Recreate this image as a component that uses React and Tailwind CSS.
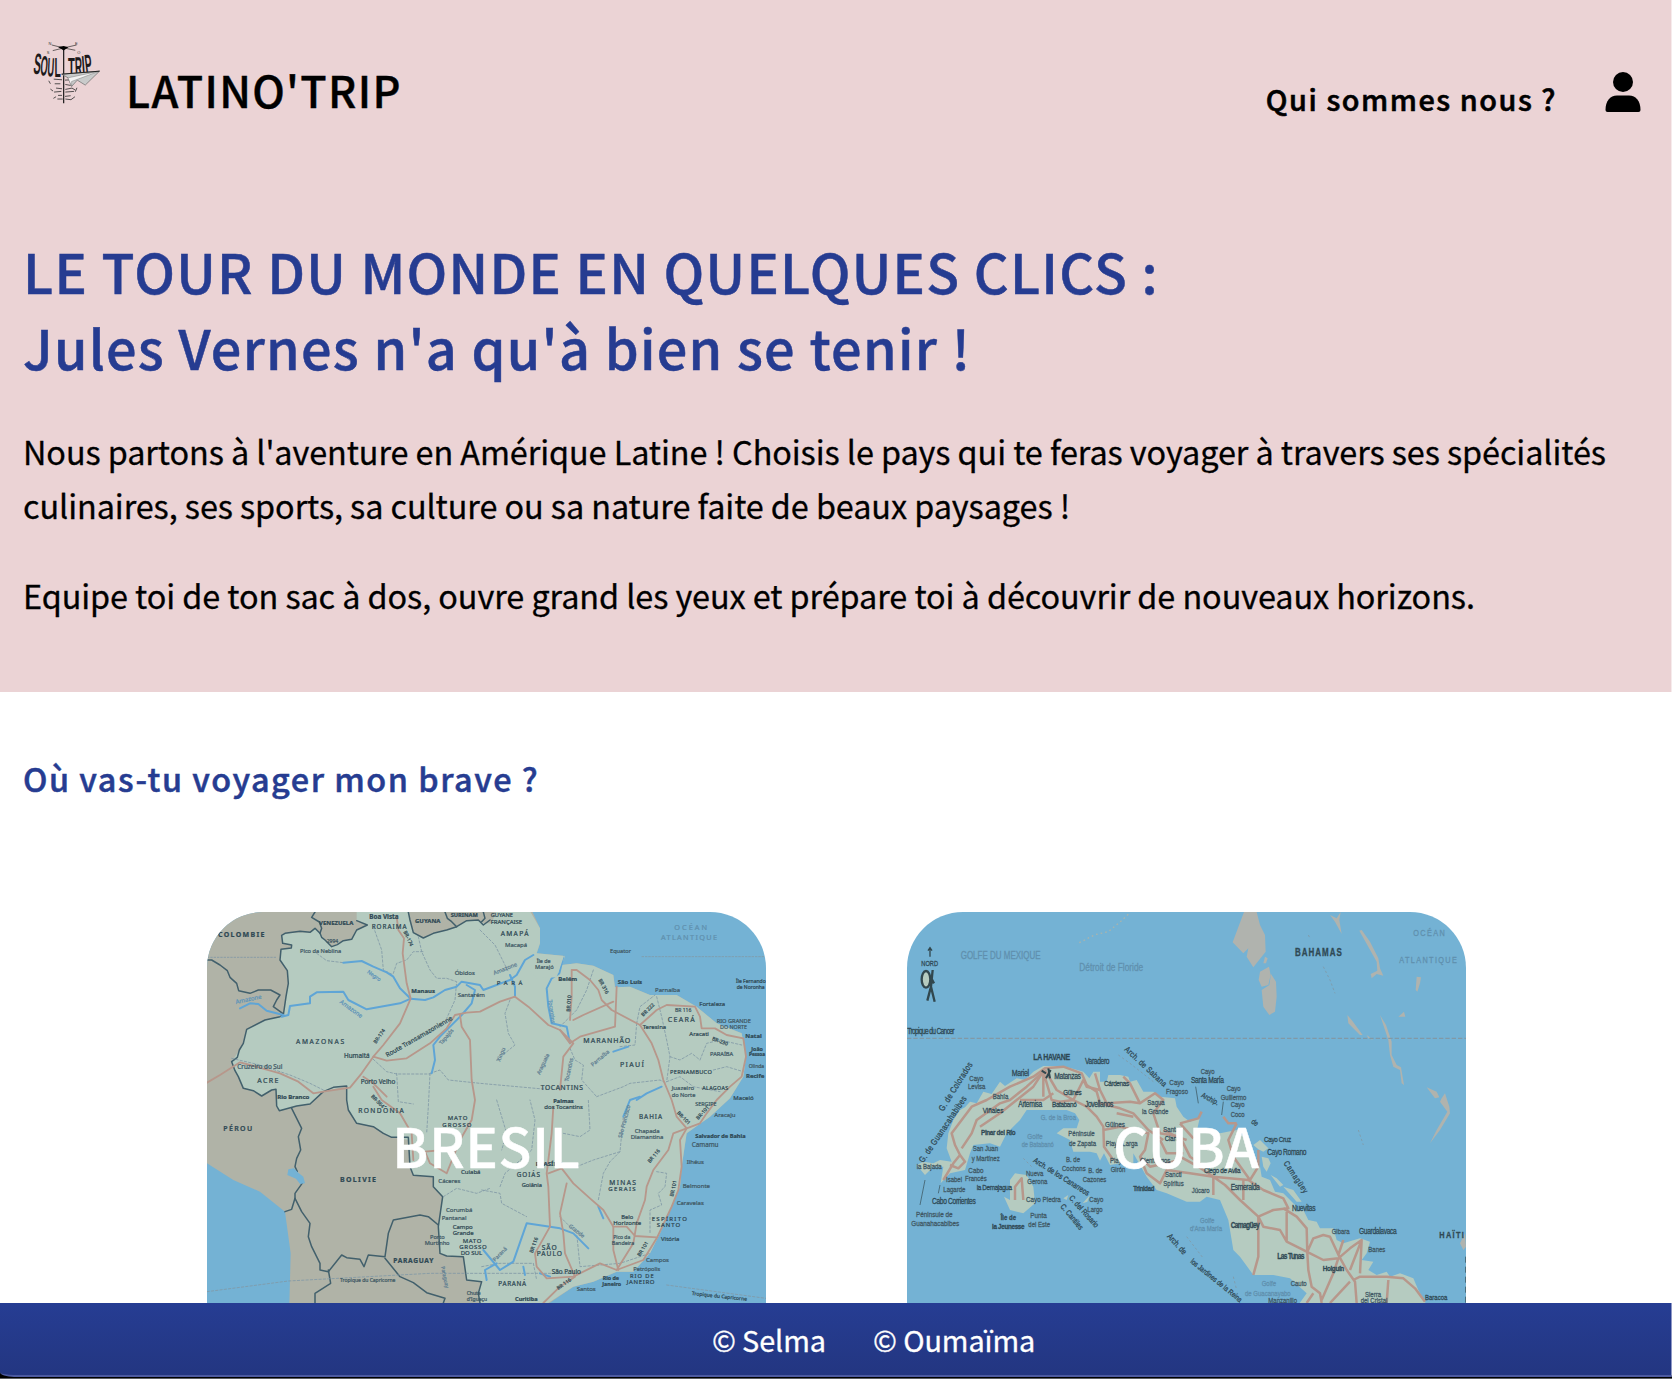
import React from "react";

const MAP_BOX = "21 36 1677 1173";
const INK = "#42606c";
const ROAD = "#b7978b";
const RIVER = "#5fa5d6";
const FAINT = "#8199a6";
const SEA = "#6090ae";

function Labels({ items, stretch = 1 }) {
  return items.map(([x, y, text, size = 20, color = "#405864", rot = 0, spacing = 0, weight = 400], i) => (
    <text
      key={i}
      fontSize={size}
      fill={color}
      stroke={color}
      strokeWidth="0.7"
      letterSpacing={spacing}
      fontWeight={weight}
      transform={`translate(${x} ${y}) rotate(${rot}) scale(1 ${stretch})`}
    >
      {text}
    </text>
  ));
}

function Lines({ paths, stroke, width, dash }) {
  return paths.map((d, i) => (
    <path key={i} d={d} fill="none" stroke={stroke} strokeWidth={width} strokeDasharray={dash} strokeLinejoin="round" />
  ));
}

const B = "#2f4954";

const brazilLabels = [
  [54, 110, "COLOMBIE", 21, B, 0, 4, 700], [357, 74, "VENEZUELA", 18, B, 0, 0, 700], [380, 128, "2994", 15],
  [508, 58, "Boa Vista", 19, B, 0, 0, 700], [515, 86, "RORAIMA", 19, B, 0, 3], [645, 69, "GUYANA", 18, B, 0, 0, 700],
  [752, 52, "SURINAM", 17, B, 0, 0, 700], [300, 159, "Pico da Neblina", 17], [872, 52, "GUYANE", 17, B], [872, 71, "FRANÇAISE", 18, B],
  [902, 109, "AMAPÁ", 20, B, 0, 4], [915, 140, "Macapá", 18], [764, 224, "Óbidos", 18], [634, 278, "Manaus", 18, B, 0, 0, 700],
  [773, 292, "Santarém", 18], [288, 433, "AMAZONAS", 20, B, 0, 5], [432, 474, "Humaitá", 19, B],
  [112, 508, "Cruzeiro do Sul", 19], [172, 549, "ACRE", 21, B, 0, 4], [232, 597, "Rio Branco", 18, B, 0, 0, 700],
  [482, 552, "Porto Velho", 19, B], [475, 638, "RONDÔNIA", 20, B, 0, 4], [562, 472, "Route Transamazonienne", 19, B, -30, 0],
  [528, 432, "BR-174", 15, B, -55], [610, 95, "BR-174", 15, B, 65], [512, 590, "BR-364", 15, B, 45],
  [500, 218, "Negro", 16, "#5c93b9", 35], [418, 308, "Amazone", 18, "#5c93b9", 36], [108, 312, "Amazone", 18, "#5c93b9", -12],
  [725, 435, "Tapajós", 16, "#607e92", -50], [890, 255, "P   A   R   Á", 18, B, 0, 3], [1010, 190, "Île de", 16], [1005, 208, "Marajó", 17],
  [1075, 242, "Belém", 18, B, 0, 0, 700], [1253, 253, "São Luís", 18, B, 0, 0, 700], [1230, 159, "Equator", 17],
  [1423, 90, "OCÉAN", 22, SEA, 0, 6], [1383, 120, "ATLANTIQUE", 22, SEA, 0, 4], [1365, 275, "Parnaíba", 18],
  [1498, 317, "Fortaleza", 18, B], [1403, 367, "CEARÁ", 21, B, 0, 4], [1425, 337, "BR 116", 15], [1328, 388, "Teresina", 18, B],
  [1550, 369, "RIO GRANDE", 17], [1560, 386, "DO NORTE", 16], [1468, 407, "Aracati", 18, B], [1636, 413, "Natal", 18, B, 0, 0, 700],
  [1654, 452, "João", 16, B, 0, 0, 700], [1647, 469, "Pessoa", 14, B, 0, 0, 700], [1646, 503, "Olinda", 15], [1638, 535, "Recife", 18, B, 0, 0, 700],
  [1530, 468, "PARAÍBA", 17], [1410, 522, "PERNAMBUCO", 17, B, 0, 1], [1415, 571, "Juazeiro", 18], [1415, 590, "do Norte", 17], [1507, 569, "ALAGOAS", 16, B, 0, 1],
  [1600, 601, "Maceió", 18, B], [1486, 617, "SERGIPE", 16], [1150, 429, "MARANHÃO", 21, B, 0, 3], [1260, 501, "PIAUÍ", 21, B, 0, 4],
  [1022, 571, "TOCANTINS", 20, B, 0, 2], [1060, 609, "Palmas", 17, B, 0, 0, 700], [1033, 627, "dos Tocantins", 18, B],
  [1608, 250, "Île Fernando", 15, B], [1610, 268, "de Noronha", 15, B], [70, 692, "PÉROU", 21, B, 0, 4, 600], [420, 847, "BOLIVIE", 21, B, 0, 4, 700],
  [580, 1088, "PARAGUAY", 20, B, 0, 2, 700], [420, 1147, "Tropique du Capricorne", 15], [743, 660, "MATO", 18, B, 0, 3], [727, 680, "GROSSO", 18, B, 0, 3],
  [783, 821, "Cuiabá", 18, B], [715, 849, "Cáceres", 18], [738, 936, "Corumbá", 18], [725, 959, "Pantanal", 18],
  [758, 987, "Campo", 18, B], [758, 1005, "Grande", 18, B], [690, 1017, "Porto", 17], [674, 1036, "Murtinho", 17], [788, 1028, "MATO", 18, B, 0, 2], [778, 1047, "GROSSO", 18, B, 0, 2], [782, 1066, "DO SUL", 18, B],
  [1317, 658, "BAHIA", 19, B, 0, 3], [1304, 700, "Chapada", 18], [1292, 718, "Diamantina", 18], [1543, 650, "Aracaju", 18],
  [1486, 714, "Salvador de Bahia", 17, B, 0, 0, 700], [1475, 741, "Camamu", 19], [1460, 793, "Ilhéus", 18], [1448, 865, "Belmonte", 18], [1430, 915, "Caravelas", 18],
  [1228, 856, "MINAS", 20, B, 0, 4], [1225, 874, "GERAIS", 18, B, 0, 4], [1355, 963, "ESPÍRITO", 18, B, 0, 4], [1370, 982, "SANTO", 18, B, 0, 3],
  [950, 832, "GOIÁS", 19, B, 0, 3], [965, 860, "Goiânia", 17, B], [1007, 798, "BRASÍLIA", 18, B, 0, 0, 700],
  [1264, 956, "Belo", 17, B], [1240, 974, "Horizonte", 18, B], [1383, 1022, "Vitória", 18, B], [1240, 1018, "Pico da", 15], [1235, 1035, "Bandeira", 16],
  [1025, 1050, "SÃO", 20, B, 0, 3], [1010, 1069, "PAULO", 20, B, 0, 3], [1055, 1122, "São Paulo", 19, B],
  [1338, 1087, "Campos", 18], [1300, 1112, "Petrópolis", 17], [1290, 1133, "RIO DE", 17, B, 0, 3], [1280, 1152, "JANEIRO", 18, B, 0, 2],
  [1208, 1139, "Rio de", 16, B, 0, 0, 700], [1207, 1157, "Janeiro", 16, B, 0, 0, 700], [1130, 1173, "Santos", 18], [895, 1158, "PARANÁ", 19, B, 0, 2],
  [945, 1202, "Curitiba", 17, B, 0, 0, 700], [1475, 1185, "Tropique du Capricorne", 15, B, 6], [800, 1185, "Chute", 15], [800, 1203, "d'Iguaçu", 15],
  [1350, 790, "BR 116", 15, B, -50], [1420, 890, "BR 101", 15, B, -78], [1430, 640, "BR-101", 15, B, 45],
  [1495, 660, "BR-101", 15, B, -48], [1320, 1070, "BR 101", 15, B, -58], [998, 1060, "BR 116", 15, B, -70], [1075, 1170, "BR 116", 15, B, -35],
  [1330, 350, "BR 222", 15, B, -45], [1195, 240, "BR 316", 15, B, 62], [1110, 335, "BR 010", 15, B, -86], [1535, 420, "BR-230", 15, B, 20],
  [1045, 300, "Tocantins", 16, "#5c93b9", 82], [1020, 525, "Araguaia", 16, "#607e92", -65], [1105, 545, "Tocantins", 16, "#607e92", -78],
  [900, 485, "Xingu", 16, "#607e92", -68], [1178, 500, "Parnaíba", 16, "#607e92", -40], [1265, 715, "São Francisco", 16, "#607e92", -75],
  [885, 1085, "Paraná", 16, "#607e92", -45], [1105, 980, "Grande", 16, "#607e92", 38], [883, 225, "Amazone", 17, "#607e92", -22], [723, 1100, "Paraguay", 15, "#607e92", 78],
];

function BrazilMap() {
  return (
    <svg viewBox={MAP_BOX} preserveAspectRatio="none" className="block h-full w-full" fontFamily="'Noto Sans', sans-serif">
      <rect x="0" y="0" width="1720" height="1230" fill="#74b2d4" />
      <path
        fill="#b0b3a7"
        d="M0 20H990L1020 85V130L1010 160L1095 168L1085 195L1130 190L1180 197L1240 225L1245 262L1290 260L1350 285L1430 285L1490 320L1550 370L1625 400L1638 470L1630 530L1590 595L1530 650L1460 700L1445 800L1440 860L1410 930L1380 1000L1350 1060L1300 1115L1250 1115L1180 1145L1120 1160L1040 1215H268L272 1060L255 935L180 875L100 840L15 786Z"
      />
      <path
        fill="#b5cbc0"
        d="M470 30V62L502 75L470 90L455 118L430 122L395 140L375 120L360 100L345 85L330 97L255 100L245 106L248 130L275 135L274 144L243 148L240 180L262 212L265 250L250 345L240 350L195 360L140 388L130 430L118 450L95 485L115 530L130 565L160 572L185 588L215 570L228 568L230 618L238 632L290 618L330 612L370 575L440 558L440 600L445 630L470 670L520 680L575 712L625 720L630 800L640 826L700 830L700 860L728 890L715 980L720 1060L740 1068L790 1070L800 1140L845 1145L835 1180L840 1215H1035L1120 1160L1180 1145L1250 1115L1300 1115L1350 1060L1380 1000L1410 930L1440 860L1445 800L1460 700L1530 650L1590 595L1630 530L1638 470L1625 400L1550 370L1490 320L1430 285L1350 285L1290 260L1245 262L1240 225L1180 197L1130 190L1085 195L1095 168L1010 160L1020 130V85L988 30H890L875 70L850 70L835 60L800 62L770 80L740 90L700 100L670 114L640 98L628 60V30Z"
      />
      <g strokeLinecap="round">
        <Lines
          stroke={INK}
          width={4.5}
          paths={[
            "M470 62L502 75L470 90L455 118L430 122L412 134L395 140L375 120L365 112L360 100L345 85L330 97L300 94L255 100L245 106L248 130L275 135L274 144L243 148L240 180L262 212L265 250L258 290L250 345L240 350L195 360L140 388L130 430L118 450L112 472L95 485L105 512L115 530L130 565L160 572L185 588L215 570L228 568L230 618L238 632L290 618L330 612L370 575L400 562L440 558L440 600L445 630L470 670L520 680L550 700L575 712L625 712L630 800L640 826L700 830L700 860L728 890L715 980L720 1060L740 1068L790 1070L800 1140L845 1145L835 1180L840 1209",
            "M625 36L630 60L640 98L670 114L700 100L740 90L770 80L800 62L835 60L850 75L870 60",
            "M21 180H35L60 195L82 212L90 232L110 250L116 272L150 280L175 270L212 270L240 285L230 300L220 320L248 340",
            "M345 36L335 52L358 66L365 85L360 100", "M735 36L742 55L755 65L770 80", "M850 36L855 55L845 65",
            "M275 625L305 685L295 710L302 750L290 775L285 800L292 815M308 848L285 880V895L275 928L255 935",
            "M285 895L305 935L330 970L325 1010L335 1040L360 1090V1110L385 1115L425 1065L440 1073L480 1078L492 1100L505 1065L555 1070L565 1000L580 960L660 945L685 950L715 975",
            "M555 1075L600 1130L640 1148L680 1178L735 1195L730 1209", "M385 1110L392 1150L345 1180V1209",
          ]}
        />
        <Lines
          stroke={FAINT}
          width={2.5}
          dash="7 6"
          paths={[
            "M520 80L545 150L550 210L580 225", "M655 110L665 155L690 210L710 235H740L770 245L765 300L740 355", "M350 160L380 182L430 188",
            "M580 220L590 190L620 180L640 155H670", "M95 475L180 495L270 525L330 550L370 570", "M520 478L560 515L590 522H690", "M590 520L595 605L640 612",
            "M690 520L720 510L745 540L840 550L1040 568", "M690 520L685 620L680 700", "M840 90L885 135L925 215", "M930 300L915 340L925 400L945 435L890 480",
            "M1180 210L1160 270L1130 330L1080 380", "M1110 445L1125 480L1150 495L1145 540L1190 590", "M1190 590L1270 560L1290 550L1380 540L1400 550",
            "M1310 370L1305 435L1260 440", "M1310 370L1320 320L1365 285", "M1370 290L1385 350L1400 420L1410 470L1400 545", "M1410 470L1440 480L1475 460L1500 480L1520 430L1560 420L1625 435",
            "M1540 510L1580 500L1630 515", "M1400 545L1440 530L1480 560L1560 575", "M730 890L770 865L830 880L870 865", "M845 870L900 880L905 910L980 950",
            "M900 860L915 820L950 790L995 750L1005 660L990 600", "M890 600L920 700L905 750", "M1090 700L1140 710L1170 690L1165 600", "M1130 800L1180 780L1260 755L1270 650",
            "M1260 755L1230 785L1210 820L1195 900", "M1370 815L1400 820L1395 860L1375 880L1385 915L1350 930V1000", "M1080 950L1130 1000L1140 1100L1260 1090L1350 1060",
            "M21 1175L265 1143L690 1120H1130", "M1400 1155L1698 1195", "M845 1100L900 1090L1000 1090L1010 1140",
          ]}
        />
        <Lines
          stroke={RIVER}
          width={6}
          paths={[
            "M430 188L485 183L520 200L560 217L580 230L600 265L632 296", "M245 350L265 345L270 318L330 310V290L350 277L430 275L445 300L500 328L600 310L632 296L675 300L700 292L735 270L770 260L785 245L840 255L850 270L930 240L950 225L975 180L1000 165",
            "M120 325L150 310L175 312L200 332L250 345", "M800 255L825 270L815 310L785 345L760 370L720 410L700 435L705 480L695 520", "M930 225L945 260V290", "M1090 170L1078 220L1055 235L1040 265L1045 320L1055 370L1100 380L1110 430",
            "M1240 455L1285 440", "M1310 600L1340 580L1385 560", "M850 1050L900 1110L940 1085L980 970L1080 985L1120 1000L1165 1045", "M860 1140L855 1110L890 1090",
            "M1195 920L1210 955", "M970 1100L975 1125M1020 1120L1050 1130", "M1270 650L1290 600L1320 590",
          ]}
        />
        <path fill="#74b2d4" d="M265 808L282 805L295 818L310 830L315 850L300 852L288 836L262 825Z" />
        <path fill="#b5cbc0" d="M1000 168L1092 168L1070 232L1010 235L992 215Z" />
        <Lines
          stroke={ROAD}
          width={5.5}
          paths={[
            "M590 50L595 90L612 115L608 160L620 250L632 296L600 370L550 435L520 470L485 520L450 563L370 575L340 580L295 545L240 520L150 495L120 487L60 525L21 548",
            "M520 470L560 482L620 475L690 430L740 385L765 345L800 338L840 335L900 305L945 290L985 320L1045 375L1080 390L1120 430L1090 470L1080 570",
            "M780 345L785 380L810 420L815 540L825 600L815 660L780 720L740 820L690 790L675 755L730 750", "M1080 390L1110 430L1140 410L1245 380L1250 260", "M1110 360L1115 290V210L1130 210L1170 240L1195 270L1205 300L1235 330L1320 375L1355 430L1375 480L1390 540L1415 600L1430 650L1460 685",
            "M1120 360L1150 345L1240 305", "M1320 375L1370 330L1400 315L1485 320L1500 350L1505 385L1545 385L1580 405L1630 415L1638 470L1625 530L1590 560L1550 600L1520 640L1500 670L1460 685L1420 700L1405 750L1360 810L1340 860L1335 900L1310 970L1300 1030L1250 1110",
            "M1460 685L1440 720L1445 800L1435 870L1415 920L1370 1015L1330 1080L1250 1110L1200 1090L1120 1130L1040 1135L1010 1100L1005 1060L1050 980L1045 860L1040 820L1055 700L1060 620",
            "M1045 820L1085 805L1120 850L1170 895L1210 930L1240 980L1240 1050L1255 1110", "M1100 850L1080 940L1090 1000L1095 1060L1125 1130L1080 1160L1030 1209", "M1240 980L1280 980L1305 1008L1370 1012",
            "M520 560L545 600L600 640L635 700L640 780", "M490 530L520 550L560 590",
          ]}
        />
      </g>
      <path d="M1325 170H1698M21 172H230" stroke={FAINT} strokeWidth="2.5" strokeDasharray="7 3" />
      <Labels items={brazilLabels} />
    </svg>
  );
}

const cubaLabels = [
  [182, 177, "GOLFE DU MEXIQUE", 24, SEA, 0, 0], [538, 214, "Détroit de Floride", 25, SEA], [64, 197, "NORD", 17, B, 0, 0], [22, 402, "Tropique du Cancer", 20, B, 0, -2],
  [1185, 168, "BAHAMAS", 24, B, 0, 3, 700], [1540, 108, "OCÉAN", 22, SEA, 0, 4], [1498, 190, "ATLANTIQUE", 22, SEA, 0, 4],
  [400, 480, "LA HAVANE", 21, B, 0, -1, 700], [555, 493, "Varadero", 20, B, 0, -1], [335, 528, "Mariel", 21, B, 0, -1], [208, 542, "Cayo", 18], [204, 566, "Levisa", 18],
  [463, 536, "Matanzas", 20, B, 0, -1], [612, 558, "Cárdenas", 19, B, 0, -1], [490, 586, "Güines", 19, B, 0, -1], [278, 598, "Bahía", 18], [355, 620, "Artemisa", 20, B, 0, -1],
  [456, 620, "Batabanó", 19, B, 0, -1], [555, 622, "Jovellanos", 20, B, 0, -1], [742, 615, "Sagua", 18], [726, 643, "la Grande", 18], [808, 556, "Cayo", 19], [798, 583, "Fragoso", 18],
  [672, 450, "Arch. de Sabana", 20, B, 43, 1], [130, 635, "G. de Colorados", 21, B, -58, 1], [70, 790, "G. de Guanacahabibes", 21, B, -56, 1],
  [248, 640, "Viñales", 19, B], [243, 706, "Pinar del Río", 19, B, 0, -1, 700], [218, 752, "San Juan", 18], [215, 782, "y Martínez", 18], [205, 820, "Cabo", 19], [195, 844, "Francés", 18],
  [138, 845, "Isabel", 18], [130, 876, "Lagarde", 18], [50, 806, "la Bajada", 18], [96, 911, "Cabo Corrientes", 20, B, 0, -1], [48, 950, "Péninsule de", 19], [34, 979, "Guanahacabibes", 19],
  [422, 660, "G. de la Broa", 18, SEA], [382, 716, "Golfe", 19, SEA], [365, 742, "de Batabanó", 17, SEA], [505, 708, "Péninsule", 18], [507, 737, "de Zapata", 18],
  [615, 680, "Güines", 19], [617, 737, "Playa Larga", 18], [630, 790, "Playa", 18], [632, 817, "Girón", 18], [498, 787, "B. de", 18], [486, 813, "Cochons", 18],
  [565, 820, "B. de", 18], [548, 846, "Cazones", 18], [378, 829, "Nueva", 18], [382, 853, "Gerona", 18], [230, 870, "la Demajagua", 19, B, 0, -1],
  [378, 906, "Cayo Piedra", 19], [302, 959, "Île de", 18, B, 0, 0, 700], [276, 986, "la Jeunesse", 19, B, 0, -1, 700], [391, 955, "Punta", 19], [385, 980, "del Este", 18],
  [398, 785, "Arch. de los Canarreos", 19, B, 32], [480, 920, "C. Cantiles", 19, B, 50], [506, 895, "C. del Rosario", 19, B, 48], [568, 907, "Cayo", 18], [562, 935, "Largo", 18],
  [700, 874, "Trinidad", 18, B, 0, -1, 700], [720, 790, "Cienfuegos", 18], [790, 695, "Santa", 18], [794, 722, "Clara", 18, B], [795, 830, "Sancti", 18], [790, 858, "Spíritus", 18],
  [800, 1010, "Arch. de", 20, B, 48], [870, 1087, "los Jardines de la Reina", 18, B, 39], [902, 521, "Cayo", 18], [873, 549, "Santa María", 20, B, 0, -1], [980, 573, "Cayo", 18], [962, 600, "Guillermo", 18], [992, 622, "Cayo", 18], [992, 652, "Coco", 18],
  [902, 590, "Archip.", 18, B, 28], [1052, 668, "de", 18, B, 35], [1092, 727, "Cayo Cruz", 19, B, 0, -1], [1102, 765, "Cayo Romano", 20, B, 0, -1], [1150, 790, "Camagüey", 20, B, 56, 2],
  [912, 820, "Ciego de Ávila", 19, B, 0, -1], [875, 880, "Júcaro", 18], [992, 870, "Esmeralda", 20, B, 0, -1], [992, 983, "Camagüey", 20, B, 0, -2, 700], [1176, 932, "Nuevitas", 20, B, 0, -1],
  [1295, 1002, "Gibara", 18], [1377, 1002, "Guardalavaca", 20, B, 0, -1], [1405, 1056, "Banes", 18], [1132, 1077, "Las Tunas", 20, B, 0, -2, 700], [1268, 1113, "Holguín", 19, B, 0, -1, 700],
  [1172, 1157, "Cauto", 18], [1395, 1190, "Sierra", 18], [1382, 1209, "del Cristal", 18], [1575, 1200, "Baracoa", 18, B], [1618, 1015, "HAÏTI", 22, B, 0, 4, 600],
  [900, 968, "Golfe", 18, SEA], [870, 993, "d'Ana María", 18, SEA], [1085, 1158, "Golfe", 18, SEA], [1035, 1188, "de Guacanayabo", 18, SEA], [1105, 1209, "Manzanillo", 18],
];

function CubaMap() {
  return (
    <svg viewBox={MAP_BOX} preserveAspectRatio="none" className="block h-full w-full" fontFamily="'Liberation Sans', sans-serif">
      <rect x="0" y="0" width="1720" height="1230" fill="#74b2d4" />
      <path
        fill="#b0b3ae"
        d="M1032 36L998 127L1030 160L1045 145L1040 170L1060 202L1097 155L1095 105L1080 75L1070 36ZM1107 200L1080 215L1076 240L1085 260L1105 255L1112 225ZM1113 222L1108 255L1085 270L1090 320L1108 345L1125 335L1130 290L1128 245ZM1290 45L1305 65L1325 102L1318 60L1322 36L1310 55ZM1378 92L1385 90L1410 125L1435 175L1440 205L1450 227L1430 222L1415 235L1412 222L1432 212L1430 185ZM1550 230L1563 232L1560 250L1552 275L1547 270ZM1342 345L1355 360L1388 405L1380 405L1345 370ZM1440 345L1458 375L1475 425L1475 465L1490 495L1503 502L1512 555L1505 550L1500 510L1480 500L1470 465L1465 420ZM1580 562L1610 575L1618 592L1605 595ZM1625 595L1635 580L1648 620L1650 640L1620 690L1590 730L1610 690L1642 635L1620 605ZM1495 350L1512 335L1516 350ZM1695 1000L1680 1030L1690 1050L1698 1040ZM1400 405L1420 420L1405 415ZM1095 170L1103 175L1098 190L1090 190Z"
      />
      <path
        fill="#b5cbc0"
        d="M50 795L70 785L100 790L120 780L155 785L140 745L145 700L160 660L180 630L195 622L210 605L230 610L250 575L275 582L300 545L315 558L350 535L375 540L400 515L430 498L490 498L550 515L568 535L580 515L600 515L600 545L620 545L625 525L660 525L685 530L690 545L710 540L730 575L760 575L780 590L825 595L830 620L850 650L870 665L900 650L890 695L940 688L960 700L1010 690L1050 730L1050 760L1080 800L1085 830L1110 840L1125 875L1150 880L1185 915L1190 935L1210 930L1225 960L1250 965L1260 985L1300 985L1310 1020L1330 1030L1380 1015L1410 1025L1400 1060L1385 1080L1420 1085L1405 1110L1430 1125L1460 1115L1470 1130L1500 1120L1540 1135L1555 1170L1580 1215H1195L1220 1180L1170 1135L1120 1125H1060L1020 1070L1000 1050L985 960L960 900L920 890L900 905L860 905L800 880L770 870L740 830L720 795L700 760L700 790L660 790L630 795L612 760L600 782L590 760L570 755H520L510 720L470 700L490 685L530 685L538 660L525 640L500 630H380L360 660L320 700L300 740L270 730L220 735L210 760L195 810L150 820L122 850L130 800L100 800L75 825ZM330 840L345 820L380 825L400 860L405 910L370 940L330 930L312 890L330 900ZM1085 770L1105 775L1112 790L1100 815L1090 800ZM1060 735L1080 720L1105 745L1090 755L1075 748ZM490 895L505 885L500 900ZM548 910L570 885L562 905ZM1112 825L1130 835L1150 855L1140 860ZM1150 860L1180 870L1205 905L1190 905Z"
      />
      <Lines
        stroke={ROAD}
        width={7.5}
        paths={[
          "M130 840L160 790L180 765L195 785L175 805L150 795M180 765L165 735L155 700L185 660L215 620L260 600L330 560L400 530L435 505L490 500L545 520L560 555L590 575L600 610L660 625L700 640L745 690L790 720",
          "M430 515L380 560L330 600L300 610L230 660L215 700L185 745M240 680L300 640L350 600L400 560L430 515V590M430 515L455 600L480 605L520 600L560 620L590 650L610 680L612 740L640 780",
          "M435 510L470 570L520 600L550 540L560 560L600 570M460 580L430 600L360 600M600 570L620 610L690 605L720 610L690 550L670 530M600 570L585 520M720 610L765 580L790 600L760 640L780 700L840 710L870 770L900 790",
          "M610 690L660 680L745 700L735 750L720 770L750 800L840 780M650 640L700 650M720 770L740 820L780 850L800 810L870 820L940 830M780 720L800 760L850 760",
          "M790 690L830 710L860 720M840 670L880 715M840 770L895 800L940 830L975 855L1020 900L1075 950L1120 930L1165 925L1150 895L1090 870L1045 840L940 830M1010 670L985 720L1000 770L1050 840L1075 800V750M840 670L895 655L905 635M970 650L985 670L1010 670M940 830V885M1030 840V900",
          "M1075 950L1090 980L1140 990L1160 1025L1220 1055L1270 1080L1315 1075L1350 1045L1385 1020L1380 1120M1075 950V1070L1060 1125M1160 925V1025M1150 925L1190 950L1220 985L1222 1060L1225 1110L1235 1160L1260 1180L1265 1209M1222 1055L1240 1015L1270 1005L1290 1010L1318 1070L1340 1110L1365 1145L1370 1209M1315 1075L1300 1120L1265 1200M1350 1145L1290 1209M1360 1140L1380 1130H1460L1510 1135L1545 1165L1575 1205M1465 1140L1460 1209M1220 1209L1240 1180M1330 1020L1315 1065M1350 1110L1385 1020",
          "M345 900V860L365 835L370 900",
        ]}
      />
      <Lines stroke={FAINT} width={3.5} dash="13 6" paths={["M21 415H1698"]} />
      <Lines stroke="#a9b4ad" width={4} dash="5 9" paths={["M538 128L585 104L625 95L665 62L690 38"]} />
      <Lines stroke={INK} width={2.5} paths={["M75 840L60 915M120 855L115 880M887 560L895 610M970 605L965 645"]} />
      <Lines stroke={FAINT} width={2.5} dash="7 7" paths={["M655 465L690 490L760 545M370 775L395 800M1225 105L1230 115M1270 200L1290 240L1305 280M1375 690L1390 735M860 1010L910 1075M1000 1130L1010 1170"]} />
      <g fill="none" stroke="#31474e" strokeWidth="7">
        <path d="M90 142V170M84 152L90 143L96 152" strokeWidth="4" />
        <ellipse cx="78" cy="238" rx="13" ry="25" fill="#b5cbc0" />
        <path d="M98 210L93 260L82 302M93 260L104 305M94 235L102 250" />
      </g>
      <path d="M425 512L438 520M445 505L450 535M438 535L452 510" stroke="#31474e" strokeWidth="6" />
      <path d="M1697 1070V1209" stroke={INK} strokeWidth="3" strokeDasharray="18 12" />
      <Labels items={cubaLabels} stretch={1.25} />
    </svg>
  );
}

function Logo() {
  return (
    <svg viewBox="95 60 210 196" className="h-[65px] w-[70px] shrink-0" fontFamily="'Liberation Sans', sans-serif">
      <path d="M193 82V251" stroke="#111" strokeWidth="3.5" />
      <path d="M157 75L193 84L232 75M160 92L193 84L228 91" fill="none" stroke="#222" strokeWidth="2" />
      <path d="M176 81L193 78L207 82L193 92Z" fill="#000" />
      <g fontSize="12" fill="#333">
        <text x="147" y="75">N</text>
        <text x="227" y="75">E</text>
        <text x="142" y="102">S</text>
        <text x="234" y="101">O</text>
      </g>
      <g fontWeight="700" fill="#1d1a1b">
        <text transform="translate(100 161) rotate(7) scale(.4 1.08)" fontSize="82">S</text>
        <text transform="translate(121 166) rotate(5) scale(.35 1.06)" fontSize="80">O</text>
        <text transform="translate(143 169) rotate(3) scale(.35 1)" fontSize="80">U</text>
        <text transform="translate(165 171) scale(.37 1)" fontSize="84">L</text>
        <text transform="translate(206 171) scale(.4 1)" fontSize="84">T</text>
        <text transform="translate(228 170) rotate(-2) scale(.36 1)" fontSize="84">R</text>
        <text transform="translate(250 168) rotate(-4) scale(.38 1)" fontSize="86">I</text>
        <text transform="translate(260 162) rotate(-7) scale(.38 1)" fontSize="82">P</text>
      </g>
      <g fill="none" stroke="#333" strokeWidth="2.5">
        <path d="M163 178L188 180M166 192H183M170 205L188 207M164 217L186 215M176 227H188M162 236L170 231M174 238H190M148 183L153 192M153 208L161 214" />
        <path d="M197 181L215 180M198 194L214 197M198 209L218 205L228 211M198 217L224 215M197 230L214 228M198 238L215 240L227 231M233 204L228 216" />
      </g>
      <path d="M187 163L301 154L258 196L234 181L217 200L206 174Z" fill="#c9cbcb" stroke="#666" strokeWidth="2" />
      <path d="M206 174L301 154L217 185V200Z" fill="#f3f3f3" stroke="#777" strokeWidth="1.5" />
      <path d="M187 163L301 154" stroke="#222" strokeWidth="3" />
    </svg>
  );
}

function CountryCard({ name, children }) {
  return (
    <a className="grid h-[465px] w-[559px] overflow-hidden rounded-[56px]">
      <div className="col-start-1 row-start-1 h-[391px]">{children}</div>
      <h3 className="relative col-start-1 row-start-1 self-center text-center text-[54px] font-medium leading-[72px] tracking-[0.8px] text-white [-webkit-text-stroke:0.5px_currentColor]">
        {name}
      </h3>
    </a>
  );
}

export default function App() {
  return (
    <div className="h-[1388px] overflow-hidden bg-white font-['Noto_Sans_CJK_SC','Noto_Sans',sans-serif] text-black">
      <div className="flex h-[1379px] w-[1672px] flex-col">
        <div className="h-[692px] shrink-0 border-r border-[#f6ebec] bg-[#ebd3d5] pl-[23px] pr-6">
          <header className="flex h-[184px] items-start justify-between">
            <div className="flex items-start gap-[25px] pl-2">
              <div className="pt-10">
                <Logo />
              </div>
              <span className="pt-[57px] text-[43.2px] font-medium leading-[64px] tracking-[1.35px] [-webkit-text-stroke:0.4px_currentColor]">LATINO'TRIP</span>
            </div>
            <nav className="flex items-start pr-[6px]">
              <a className="pt-[75px] text-[28.8px] font-medium leading-[48px] tracking-[1.55px] [-webkit-text-stroke:0.6px_currentColor]">Qui sommes nous ?</a>
              <svg viewBox="0 0 36 40" className="ml-[48px] mt-[72px] h-10 w-9" fill="#000">
                <circle cx="18" cy="10" r="10" />
                <path d="M12 23.500h12c7 0 11.500 5.500 11.500 14.500a2 2 0 0 1-2 2h-31a2 2 0 0 1-2-2c0-9 4.500-14.500 11.500-14.500Z" />
              </svg>
            </nav>
          </header>
          <h1 className="mt-[49px] whitespace-nowrap text-[54px] font-medium leading-[76px] tracking-[1.27px] text-[#263c91] [-webkit-text-stroke:0.5px_currentColor]">
            <span className="block w-max">LE TOUR DU MONDE EN QUELQUES CLICS :</span>
            <span className="block w-max">Jules Vernes n'a qu'à bien se tenir !</span>
          </h1>
          <p className="mt-[39px] whitespace-nowrap text-[32.4px] leading-[54px] tracking-[-0.08px] [-webkit-text-stroke:0.3px_currentColor]">
            <span className="block w-max">Nous partons à l'aventure en Amérique Latine ! Choisis le pays qui te feras voyager à travers ses spécialités</span>
            <span className="block w-max">culinaires, ses sports, sa culture ou sa nature faite de beaux paysages !</span>
          </p>
          <p className="mt-[36px] w-max whitespace-nowrap text-[32.4px] leading-[54px] tracking-[-0.08px] [-webkit-text-stroke:0.3px_currentColor]">
            Equipe toi de ton sac à dos, ouvre grand les yeux et prépare toi à découvrir de nouveaux horizons.
          </p>
        </div>
        <main className="h-[611px] shrink-0 overflow-hidden bg-white">
          <h2 className="ml-[23px] mt-[58px] w-max text-[32.4px] font-medium leading-[56px] tracking-[1.52px] text-[#263c91] [-webkit-text-stroke:0.5px_currentColor]">
            Où vas-tu voyager mon brave ?
          </h2>
          <div className="ml-[207px] mt-[106px] flex gap-[141px]">
            <CountryCard name="BRESIL">
              <BrazilMap />
            </CountryCard>
            <CountryCard name="CUBA">
              <CubaMap />
            </CountryCard>
          </div>
        </main>
        <div className="h-[76px] shrink-0 border-b border-[#5b5d63] bg-black">
          <footer className="flex h-[74px] items-center justify-center gap-[47px] border-b-2 border-r border-b-[#4c5aa0] border-r-[#8f98c6] bg-linear-to-b from-[#263d93] to-[#233681] pl-[76px] pt-[2px] text-[28.8px] leading-[40px] tracking-[-0.08px] text-white [-webkit-text-stroke:0.3px_currentColor] [border-bottom-left-radius:14px_5px]">
            <span>© Selma</span>
            <span>© Oumaïma</span>
          </footer>
        </div>
      </div>
    </div>
  );
}
